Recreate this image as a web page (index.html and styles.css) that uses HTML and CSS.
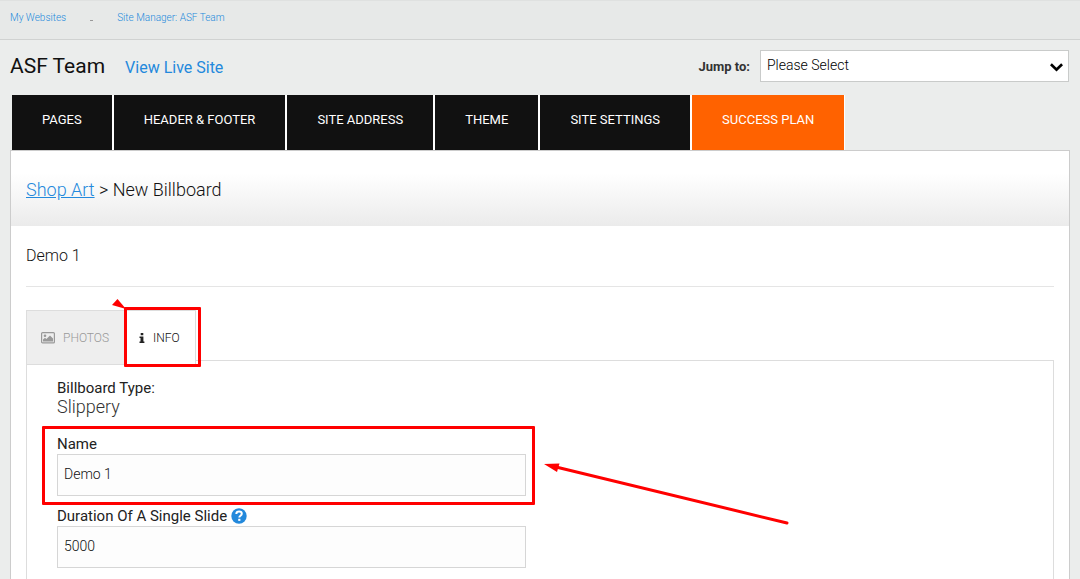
FILE: index.html
```html
<!DOCTYPE html>
<html lang="en">
<head>
<meta charset="utf-8">
<title>Site Manager: ASF Team</title>
<link rel="stylesheet" href="styles.css">
</head>
<body class="page">
<nav class="crumbs" aria-label="Breadcrumb">
  <a href="#">My Websites</a>
  <span class="crumb-dot"></span>
  <a href="#">Site Manager: ASF Team</a>
</nav>
<header class="site-header">
  <h1 class="site-title">ASF Team</h1>
  <a class="live-link" href="#">View Live Site</a>
  <div class="jump">
    <label class="jump-label" for="jump">Jump to:</label>
    <div class="select-wrap">
      <select class="jump-select" id="jump"><option>Please Select</option></select>
      <svg class="chevron" viewBox="0 0 12 8" aria-hidden="true"><path d="M.8 1 6 6 11.200 1" fill="none" stroke="#000" stroke-width="2.600"/></svg>
    </div>
  </div>
</header>
<nav class="main-nav" aria-label="Site sections">
  <a href="#">PAGES</a>
  <a href="#">HEADER &amp; FOOTER</a>
  <a href="#">SITE ADDRESS</a>
  <a href="#">THEME</a>
  <a href="#">SITE SETTINGS</a>
  <a class="plan" href="#">SUCCESS PLAN</a>
</nav>
<main class="panel">
  <div class="panel-head"><a href="#">Shop Art</a> &gt; New Billboard</div>
  <div class="panel-body">
    <h2 class="billboard-name">Demo 1</h2>
    <div class="tabs" role="tablist">
      <button class="tab" type="button" role="tab">
        <svg class="photo-icon" viewBox="0 0 14 12" aria-hidden="true"><rect x=".6" y=".6" width="12.8" height="10.3" rx="1" fill="none" stroke="#999" stroke-width="1.2"/><circle cx="4" cy="3.8" r="1.3" fill="#999"/><path d="M2 9.5V7.6L4 5.7l1.4 1.2L9 3.4l3 3v3.1z" fill="#999"/></svg>
        <span>PHOTOS</span>
      </button>
      <div class="tab-slot">
        <button class="tab tab-active" type="button" role="tab" aria-selected="true">
          <svg class="info-icon" viewBox="0 0 6 10" aria-hidden="true"><path d="M1.7 0h2.6v2.3H1.7zM.5 3.5h3.9v5h1V10H.5V8.500h1V5h-1z" fill="#222"/></svg>
          <span>INFO</span>
        </button>
        <span class="mark mark-tab"></span>
        <svg class="mark-pointer" viewBox="0 0 14 11" aria-hidden="true"><path d="M5.500 1 0 7 14 11z" fill="#f00"/></svg>
      </div>
    </div>
    <form class="tab-panel">
      <div class="type-label">Billboard Type:</div>
      <div class="type-value">Slippery</div>
      <div class="field">
        <label for="name">Name</label>
        <input id="name" type="text" value="Demo 1">
        <span class="mark mark-field"></span>
        <svg class="mark-arrow" viewBox="0 0 246 62" aria-hidden="true"><path d="M12 4 243 60" fill="none" stroke="#f00" stroke-width="3" stroke-linecap="round"/><path d="M0 1 15.500.500 13 9z" fill="#f00"/></svg>
      </div>
      <div class="field">
        <label for="duration">Duration Of A Single Slide
          <svg class="help-icon" viewBox="0 0 16 16" aria-hidden="true"><circle cx="8" cy="8" r="7.700" fill="#2389dc"/><path d="M5.300 6C5.400 4.500 6.600 3.600 8.100 3.600c1.600 0 2.700.900 2.700 2.200 0 2-2.500 1.900-2.500 3.700" fill="none" stroke="#fff" stroke-width="2"/><path d="M7.200 10.800h2.200v2.100H7.200z" fill="#fff"/></svg>
        </label>
        <input id="duration" type="text" value="5000">
      </div>
    </form>
  </div>
</main>
</body>
</html>
```
FILE: styles.css
```css
* { box-sizing: border-box; }

.page {
  display: flex;
  flex-direction: column;
  min-height: 100vh;
  margin: 0;
  background: #ebedec;
  color: #111;
  font-family: Roboto, "Liberation Sans", sans-serif;
  font-weight: 300;
}

a { color: #2389dc; }

.crumbs {
  display: flex;
  align-items: center;
  gap: 24px;
  height: 40px;
  padding: 0 10px 5px;
  border-top: 1px solid #dfe1e0;
  border-bottom: 1px solid #d0d2d1;
  background: #e7e9e8;
  font-size: 10px;
}
.crumbs a { text-decoration: none; }
.crumb-dot {
  width: 3px;
  height: 1px;
  margin-top: 5px;
  background: #999;
}

.site-header {
  display: flex;
  align-items: center;
  height: 55px;
  padding: 0 11px 3px 10px;
}
.site-title {
  margin: 0;
  font-size: 21px;
  font-weight: 400;
}
.live-link {
  margin: 2px 0 0 20px;
  font-size: 16px;
  font-weight: 400;
  text-decoration: none;
}
.jump {
  display: flex;
  align-items: center;
  gap: 10px;
  margin-left: auto;
}
.jump-label {
  color: #333;
  font-size: 13px;
  font-weight: 700;
}
.select-wrap { position: relative; }
.jump-select {
  appearance: none;
  width: 309px;
  height: 32px;
  padding: 0 24px 2px 6px;
  border: 1px solid #c9cbca;
  border-radius: 0;
  background: #fff;
  color: #000;
  font: 300 14px Roboto, sans-serif;
}
.chevron {
  position: absolute;
  right: 6px;
  top: 13px;
  width: 13px;
  height: 9px;
}

.main-nav {
  display: flex;
  padding: 0 11px;
}
.main-nav a {
  height: 55px;
  padding: 0 30px 6px;
  border: solid #fff;
  border-width: 0 1px;
  background: #111;
  color: #fff;
  font-size: 13px;
  font-weight: 400;
  line-height: 49px;
  text-decoration: none;
  white-space: nowrap;
}
.main-nav a:first-child { border-left-color: #ebedec; }
.main-nav .plan { background: #ff6200; }

.panel {
  display: flex;
  flex: 1;
  flex-direction: column;
  margin: 0 10px;
  border: 1px solid #ccc;
  border-bottom: 0;
  background: #fff;
}
.panel-head {
  height: 75px;
  padding: 0 15px;
  background: linear-gradient(#fff 30%, #ebebeb);
  font-size: 18px;
  line-height: 77px;
}
.panel-body {
  display: flex;
  flex: 1;
  flex-direction: column;
  padding: 0 15px;
}
.billboard-name {
  margin: 0 0 23px;
  border-bottom: 1px solid #e5e5e5;
  font-size: 16px;
  font-weight: 300;
  line-height: 60px;
}

.tabs {
  position: relative;
  display: flex;
  height: 50px;
}
.tab {
  display: flex;
  align-items: center;
  gap: 8px;
  height: 55px;
  padding: 0 15px 0 14px;
  border: 1px solid #ddd;
  border-right: 0;
  background: #eee;
  color: #999;
  font: 300 12px Roboto, sans-serif;
}
.tab-slot {
  position: relative;
  height: 55px;
}
.tab-active {
  border-right: 1px solid #ddd;
  border-bottom: 0;
  background: #fff;
  color: #111;
}
.photo-icon {
  width: 14px;
  height: 12px;
}
.info-icon {
  width: 6px;
  height: 10px;
}

.tab-panel {
  flex: 1;
  padding: 18px 30px 11px;
  border: 1px solid #ddd;
  border-bottom: 0;
}
.type-label,
.field label {
  color: #222;
  font-size: 15px;
  font-weight: 400;
  line-height: 18px;
}
.type-value {
  margin-bottom: 17px;
  color: #333;
  font-size: 18px;
  line-height: 20px;
}
.field {
  position: relative;
  max-width: 469px;
  margin-bottom: 10px;
}
.field label {
  display: flex;
  align-items: center;
  gap: 4px;
  height: 20px;
}
.field input {
  display: block;
  width: 100%;
  height: 42px;
  padding: 0 6px 2px;
  border: 1px solid #d6d6d6;
  background: #fdfdfd;
  color: #111;
  font: 300 14px Roboto, sans-serif;
}
.help-icon {
  width: 16px;
  height: 16px;
}

/* Red call-outs lie over the page content */
.mark {
  position: absolute;
  border: 3px solid #f00;
  border-radius: 1px;
  pointer-events: none;
}
.mark-tab { inset: -3px -5px -2px 0; }
.mark-pointer {
  position: absolute;
  left: -12px;
  top: -12px;
  width: 14px;
  height: 11px;
}
.mark-field { inset: -8px -9px -9px -15px; }
.mark-arrow {
  position: absolute;
  left: calc(100% + 18px);
  top: 29px;
  width: 246px;
  height: 62px;
}
```
